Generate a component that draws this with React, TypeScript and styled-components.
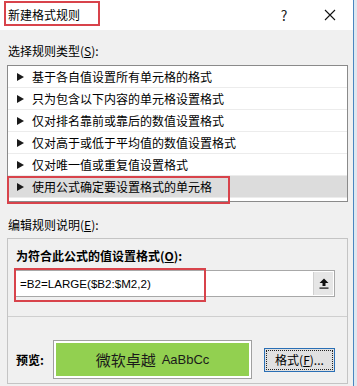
import React from "react";
import styled, { createGlobalStyle } from "styled-components";

const GlobalStyle = createGlobalStyle`
  html, body {
    margin: 0;
    padding: 0;
    background: #dfe7f0;
  }
  body {
    font-family: "Noto Sans CJK SC", "Noto Sans", sans-serif;
    font-size: 12px;
    color: #000;
  }
`;

const Dialog = styled.div`
  width: 353px;
  height: 386px;
  background: #f0f0f0;
  border-right: 1px solid #4a86c0;
  display: flex;
  flex-direction: column;
  overflow: hidden;
`;

const TitleBar = styled.div`
  height: 30px;
  background: #fff;
  display: flex;
  align-items: center;
  padding-left: 8px;
`;

const Title = styled.div`
  position: relative;
  line-height: 20px;
  flex: 1;
  &::after {
    content: "";
    position: absolute;
    left: -4px;
    top: -4px;
    width: 92px;
    height: 21px;
    border: 2px solid #d8434b;
  }
`;

const TitleButton = styled.div`
  width: 46px;
  height: 30px;
  display: flex;
  align-items: center;
  justify-content: center;
  font-size: 14px;
  color: #222;
`;

const Body = styled.div`
  padding: 11px 5px 0 7px;
  display: flex;
  flex-direction: column;
`;

const SectionLabel = styled.div<{ gap: number }>`
  line-height: 20px;
  padding-left: 1px;
  margin-bottom: ${(p) => p.gap}px;
`;

const Key = styled.span`
  text-decoration: underline;
  text-underline-offset: 1px;
`;

const ListBox = styled.div`
  border: 1px solid #8a8a8a;
  background: #fff;
  padding-bottom: 3px;
  margin-bottom: 13px;
`;

const Row = styled.div<{ selected?: boolean }>`
  position: relative;
  height: 21px;
  border-bottom: 1px solid #ececec;
  background: ${(p) => (p.selected ? "#dcdcdc" : "#fff")};
  display: flex;
  align-items: center;
  padding-left: 9px;
  gap: 8px;
`;

const Arrow = styled.span`
  width: 0;
  height: 0;
  border-left: 7px solid #1a1a1a;
  border-top: 4px solid transparent;
  border-bottom: 4px solid transparent;
`;

const RedMark = styled.div<{ w: number; h: number; l: number; t: number }>`
  position: absolute;
  left: ${(p) => p.l}px;
  top: ${(p) => p.t}px;
  width: ${(p) => p.w}px;
  height: ${(p) => p.h}px;
  border: 2px solid #d8434b;
  pointer-events: none;
`;

const GroupBox = styled.div`
  border: 1px solid #c4c4c4;
  height: 144px;
`;

const FormulaSection = styled.div`
  padding: 7px 12px 19px 7px;
`;

const BoldLabel = styled.div`
  font-weight: bold;
  line-height: 20px;
  padding-left: 1px;
  margin-bottom: 4px;
`;

const InputWrap = styled.div`
  position: relative;
  height: 25px;
  border: 1px solid #a8a8a8;
  background: #fff;
  display: flex;
  align-items: center;
`;

const InputText = styled.div`
  flex: 1;
  padding-left: 4px;
  font-family: "Liberation Sans", "Noto Sans CJK SC", sans-serif;
  font-size: 11.6px;
`;

const UpButton = styled.div`
  width: 19px;
  height: 23px;
  margin-right: 1px;
  background: #e6e6e6;
  border-left: 1px solid #d0d0d0;
  display: flex;
  align-items: center;
  justify-content: center;
`;

const PreviewSection = styled.div`
  border-top: 1px solid #cfcfcf;
  padding: 23px 12px 0 8px;
  display: flex;
  align-items: center;
`;

const PreviewLabel = styled.div`
  font-weight: bold;
  width: 37px;
`;

const Swatch = styled.div`
  width: 193px;
  height: 33px;
  border: 1px solid #a0a0a0;
  padding: 2px;
  background: #fff;
`;

const SwatchFill = styled.div`
  height: 100%;
  background: #92d050;
  display: flex;
  align-items: center;
  justify-content: center;
  gap: 6px;
  font-size: 15px;
  color: #1a1a1a;
`;

const Latin = styled.span`
  font-family: "Liberation Sans", "Noto Sans", sans-serif;
  font-size: 13px;
`;

const FormatButton = styled.div`
  margin-left: auto;
  width: 69px;
  height: 22px;
  border: 1px solid #2a6fb5;
  background: #e1e1e1;
  display: flex;
  align-items: center;
  justify-content: center;
  position: relative;
  &::after {
    content: "";
    position: absolute;
    inset: 1px;
    border: 1px dotted #222;
  }
`;

const rules = [
  "基于各自值设置所有单元格的格式",
  "只为包含以下内容的单元格设置格式",
  "仅对排名靠前或靠后的数值设置格式",
  "仅对高于或低于平均值的数值设置格式",
  "仅对唯一值或重复值设置格式",
  "使用公式确定要设置格式的单元格",
];

export default function App() {
  return (
    <>
      <GlobalStyle />
      <Dialog>
        <TitleBar>
          <Title>新建格式规则</Title>
          <TitleButton>?</TitleButton>
          <TitleButton>
            <svg width="12" height="12" viewBox="0 0 12 12">
              <path d="M1 1L11 11M11 1L1 11" stroke="#111" strokeWidth="1.1" />
            </svg>
          </TitleButton>
        </TitleBar>
        <Body>
          <SectionLabel gap={4}>
            选择规则类型(<Key>S</Key>):
          </SectionLabel>
          <ListBox>
            {rules.map((r, i) => {
              const sel = i === rules.length - 1;
              return (
                <Row key={r} selected={sel}>
                  <Arrow />
                  <span>{r}</span>
                  {sel && <RedMark l={-1} t={0} w={219} h={24} />}
                </Row>
              );
            })}
          </ListBox>
          <SectionLabel gap={3}>
            编辑规则说明(<Key>E</Key>):
          </SectionLabel>
          <GroupBox>
            <FormulaSection>
              <BoldLabel>
                为符合此公式的值设置格式(<Key>O</Key>):
              </BoldLabel>
              <InputWrap>
                <InputText>=B2=LARGE($B2:$M2,2)</InputText>
                <UpButton>
                  <svg width="10" height="11" viewBox="0 0 10 11">
                    <path d="M5 0.5L9.5 5H6.5V8H3.5V5H0.5Z" fill="#111" />
                    <rect x="0.5" y="9.5" width="9" height="1.2" fill="#111" />
                  </svg>
                </UpButton>
                <RedMark l={-2} t={-3} w={188} h={30} />
              </InputWrap>
            </FormulaSection>
            <PreviewSection>
              <PreviewLabel>预览:</PreviewLabel>
              <Swatch>
                <SwatchFill>
                  <span>微软卓越</span>
                  <Latin>AaBbCc</Latin>
                </SwatchFill>
              </Swatch>
              <FormatButton>
                格式(<Key>F</Key>)...
              </FormatButton>
            </PreviewSection>
          </GroupBox>
        </Body>
      </Dialog>
    </>
  );
}
